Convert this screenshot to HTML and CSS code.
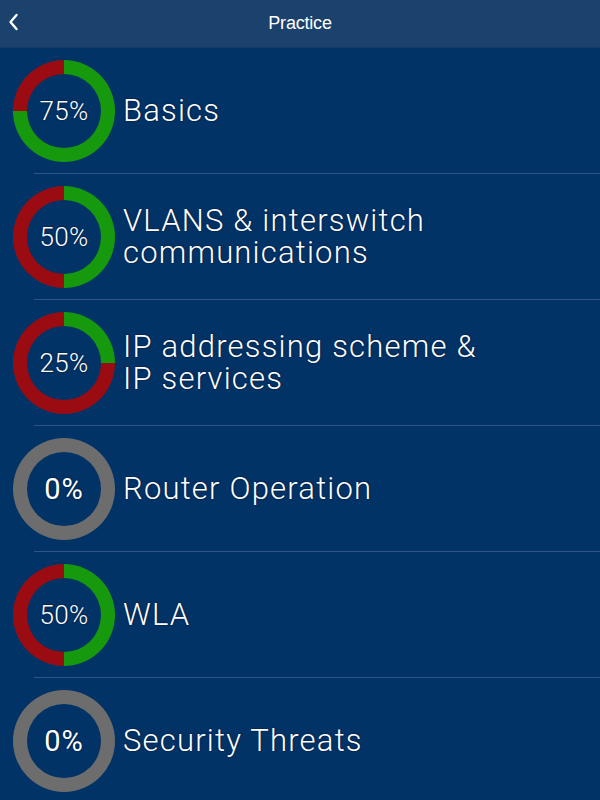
FILE: index.html
```html
<!DOCTYPE html>
<html lang="en">
  <head>
    <meta charset="UTF-8" />
    <meta name="viewport" content="width=device-width, initial-scale=1.0" />
    <title>Practice</title>
    <link rel="stylesheet" href="styles.css">
  </head>
  <body>
    <header class="topbar">
      <button class="back" aria-label="Back">
        <svg width="12" height="18" viewBox="0 0 12 18">
          <path d="M9.5 2 L3.5 9 L9.5 16" fill="none" stroke="#fff" stroke-width="2.4" stroke-linecap="round" stroke-linejoin="round" />
        </svg>
      </button>
      <h1 class="title">Practice</h1>
    </header>

    <ul class="topics">
      <li class="topic">
        <div class="ring" style="--p: 75%"><span class="pct">75%</span></div>
        <div class="name">Basics</div>
      </li>
      <li class="topic">
        <div class="ring" style="--p: 50%"><span class="pct">50%</span></div>
        <div class="name">VLANS &amp; interswitch<br />communications</div>
      </li>
      <li class="topic">
        <div class="ring" style="--p: 25%"><span class="pct">25%</span></div>
        <div class="name">IP addressing scheme &amp;<br />IP services</div>
      </li>
      <li class="topic">
        <div class="ring empty"><span class="pct">0%</span></div>
        <div class="name">Router Operation</div>
      </li>
      <li class="topic">
        <div class="ring" style="--p: 50%"><span class="pct">50%</span></div>
        <div class="name">WLA</div>
      </li>
      <li class="topic">
        <div class="ring empty"><span class="pct">0%</span></div>
        <div class="name">Security Threats</div>
      </li>
    </ul>
  </body>
</html>
```

FILE: styles.css
```css
body {
  margin: 0;
  padding: 0;
  background-color: #023366;
  font-family: "Liberation Sans", Arial, sans-serif;
  color: #fff;
  overflow: hidden;
}
.topbar {
  position: relative;
  height: 47px;
  background-color: #1b416d;
  border-bottom: 1px solid #173a63;
  display: flex;
  align-items: center;
  justify-content: center;
}
.back {
  position: absolute;
  left: 7px;
  top: 13px;
  padding: 0;
  border: none;
  background: none;
  display: flex;
}
.title {
  margin: 0;
  font-size: 18px;
  font-weight: normal;
  letter-spacing: -0.2px;
}
.topics {
  list-style: none;
  margin: 0;
  padding: 0 0 0 34px;
}
.topic {
  height: 125px;
  border-bottom: 1px solid #2d5686;
  display: flex;
  align-items: center;
  gap: 8px;
}
.ring {
  margin-left: -21px;
  width: 102px;
  height: 102px;
  border-radius: 50%;
  background: conic-gradient(#17990d 0 var(--p), #9a0b12 var(--p) 100%);
  display: flex;
  align-items: center;
  justify-content: center;
  flex-shrink: 0;
}
.ring.empty {
  background: #6d6d6d;
}
.pct {
  width: 74px;
  height: 74px;
  border-radius: 50%;
  background-color: #023366;
  display: flex;
  align-items: center;
  justify-content: center;
  font-family: Roboto, sans-serif;
  font-weight: 300;
  font-size: 26px;
  letter-spacing: 0.3px;
  text-shadow: 0 0 2px #001030;
}
.empty .pct {
  font-weight: 400;
  font-size: 29px;
  letter-spacing: 1px;
}
.name {
  font-family: Roboto, sans-serif;
  font-weight: 300;
  font-size: 31px;
  line-height: 32px;
  letter-spacing: 1.2px;
  text-shadow: 0 0 2px #001030;
}
```
